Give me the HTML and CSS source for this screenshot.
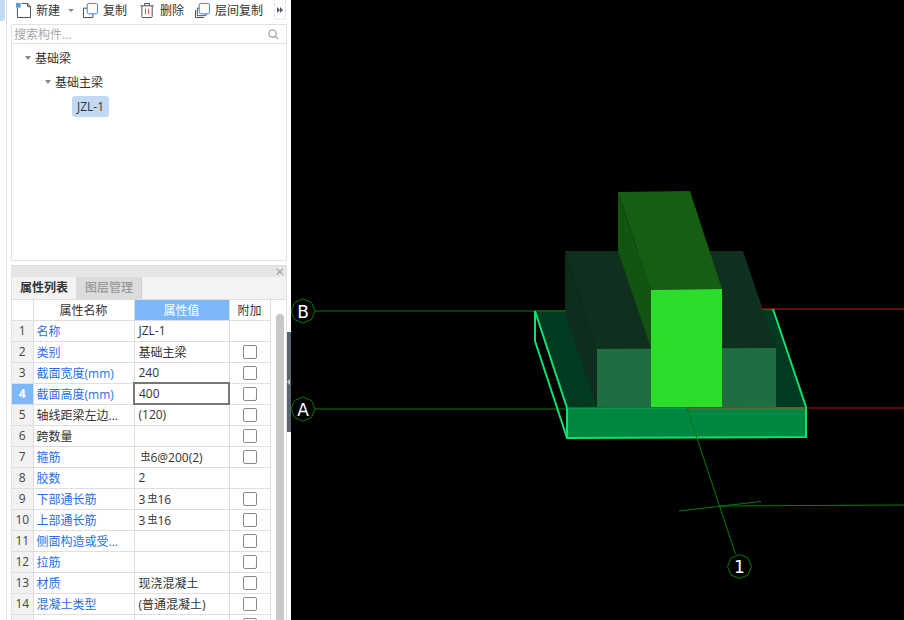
FILE: index.html
```html
<!DOCTYPE html>
<html lang="en">

<head>
  <meta charset="UTF-8" />
  <meta name="viewport" content="width=device-width, initial-scale=1" />
  <title>基础梁</title>
  <link rel="stylesheet" href="styles.css">
</head>

<body>
  <div class="app">
    <div class="side">
      <div class="rail">
        <div class="rail-tab"></div>
      </div>
      <div class="main">
        <!-- toolbar -->
        <div class="toolbar">
          <span class="tool tool-new">
            <svg class="icon" viewBox="0 0 16 16">
              <path class="ic-line" d="M1.5 5v10.5h14V4l-3-3.500H6" />
              <path class="ic-line" d="M12.500 .5v3.500h3" />
              <rect class="ic-dots" x="0" y="0" width="5" height="5" />
            </svg>
            新建
          </span>
          <span class="caret-small"></span>
          <span class="tool tool-copy">
            <svg class="icon" viewBox="0 0 16 16">
              <path class="ic-line" d="M4.500 5.500H.5v10h10v-4" />
              <rect class="ic-blue" x="4.500" y=".5" width="11" height="11" rx="1.500" />
            </svg>
            复制
          </span>
          <span class="tool tool-del">
            <svg class="icon" viewBox="0 0 16 16">
              <path class="ic-line" d="M.5 3h14M5 3V.5h5V3M2 3v11.500q0 1 1 1h9q1 0 1-1V3" />
              <path class="ic-red" d="M5.800 6v6M9.200 6v6" />
            </svg>
            删除
          </span>
          <span class="tool tool-layer">
            <svg class="icon" viewBox="0 0 16 16">
              <path class="ic-line" d="M4.500 5.500H2.500v8h9v-2M.5 7.500v8h9" />
              <rect class="ic-blue" x="4.500" y=".5" width="11" height="11" rx="1.500" />
            </svg>
            层间复制
          </span>
          <span class="more">
            <span class="more-arrow"></span><span class="more-arrow"></span>
          </span>
        </div>

        <!-- search -->
        <div class="search">
          <span>搜索构件...</span>
          <svg class="search-icon" viewBox="0 0 12 12">
            <circle cx="5" cy="5" r="4" />
            <path d="M8 8l3 3" />
          </svg>
        </div>

        <!-- tree -->
        <div class="tree">
          <div class="tree-row level-1"><span class="tree-caret"></span>基础梁</div>
          <div class="tree-row level-2"><span class="tree-caret"></span>基础主梁</div>
          <div class="tree-row level-3"><span class="tree-pill">JZL-1</span></div>
        </div>

        <!-- attributes -->
        <div class="panel">
          <div class="panel-head"><span class="panel-close">×</span></div>
          <div class="tabs">
            <div class="tab active">属性列表</div>
            <div class="tab">图层管理</div>
          </div>
          <div class="grid-wrap">
            <table class="grid">
              <colgroup>
                <col class="c-num">
                <col class="c-name">
                <col class="c-val">
                <col class="c-add">
              </colgroup>
              <tr class="head">
                <th></th>
                <th>属性名称</th>
                <th class="sel-head">属性值</th>
                <th>附加</th>
              </tr>
              <tr>
                <td class="num">1</td>
                <td class="name blue">名称</td>
                <td class="val">JZL-1</td>
                <td></td>
              </tr>
              <tr>
                <td class="num">2</td>
                <td class="name blue">类别</td>
                <td class="val">基础主梁</td>
                <td class="add"><span class="check"></span></td>
              </tr>
              <tr>
                <td class="num">3</td>
                <td class="name blue">截面宽度(mm)</td>
                <td class="val">240</td>
                <td class="add"><span class="check"></span></td>
              </tr>
              <tr>
                <td class="num cur">4</td>
                <td class="name blue">截面高度(mm)</td>
                <td class="val editing">400</td>
                <td class="add"><span class="check"></span></td>
              </tr>
              <tr>
                <td class="num">5</td>
                <td class="name">轴线距梁左边...</td>
                <td class="val">(120)</td>
                <td class="add"><span class="check"></span></td>
              </tr>
              <tr>
                <td class="num">6</td>
                <td class="name">跨数量</td>
                <td class="val"></td>
                <td class="add"><span class="check"></span></td>
              </tr>
              <tr>
                <td class="num">7</td>
                <td class="name blue">箍筋</td>
                <td class="val"><span class="rebar">虫</span>6@200(2)</td>
                <td class="add"><span class="check"></span></td>
              </tr>
              <tr>
                <td class="num">8</td>
                <td class="name blue">胶数</td>
                <td class="val">2</td>
                <td></td>
              </tr>
              <tr>
                <td class="num">9</td>
                <td class="name blue">下部通长筋</td>
                <td class="val">3<span class="rebar">虫</span>16</td>
                <td class="add"><span class="check"></span></td>
              </tr>
              <tr>
                <td class="num">10</td>
                <td class="name blue">上部通长筋</td>
                <td class="val">3<span class="rebar">虫</span>16</td>
                <td class="add"><span class="check"></span></td>
              </tr>
              <tr>
                <td class="num">11</td>
                <td class="name blue">侧面构造或受...</td>
                <td class="val"></td>
                <td class="add"><span class="check"></span></td>
              </tr>
              <tr>
                <td class="num">12</td>
                <td class="name blue">拉筋</td>
                <td class="val"></td>
                <td class="add"><span class="check"></span></td>
              </tr>
              <tr>
                <td class="num">13</td>
                <td class="name blue">材质</td>
                <td class="val">现浇混凝土</td>
                <td class="add"><span class="check"></span></td>
              </tr>
              <tr>
                <td class="num">14</td>
                <td class="name blue">混凝土类型</td>
                <td class="val">(普通混凝土)</td>
                <td class="add"><span class="check"></span></td>
              </tr>
              <tr>
                <td class="num"></td>
                <td class="name"></td>
                <td class="val"></td>
                <td class="add"><span class="check"></span></td>
              </tr>
            </table>
            <div class="scroll">
              <div class="thumb"></div>
            </div>
          </div>
        </div>
      </div>
    </div>

    <div class="splitter"><span class="splitter-arrow"></span></div>

    <!-- 3d view, coordinates are those of the whole window -->
    <div class="view">
      <svg class="scene" viewBox="291 0 613 620">
        <!-- axis lines -->
        <path class="axis" d="M315 311H565M315 409H687M687 408L735.500 554M679 511L761 501.500M719 506L904 505" />
        <path class="axis-red" d="M763 309H904M806 408H904" />

        <!-- slab -->
        <polygon class="slab-top" points="535,311 773,309 806,407 567,408" />
        <polygon class="slab-front" points="567,408 806,407 806,437 567,438" />
        <path class="axis" d="M535 311H565M743 309.500H773" />

        <!-- wide beam -->
        <polygon class="wide-top" points="565,251 743,251 776,348 597,349" />
        <polygon class="wide-side" points="565,251 597,349 597,407 565,312" />
        <polygon class="wide-front" points="597,349 776,348 776,407 597,407" />

        <!-- narrow beam -->
        <polygon class="beam-top" points="618,192 690,191 722,289 651,290" />
        <polygon class="beam-side" points="618,192 651,290 651,348 618,251" />
        <polygon class="beam-front" points="651,290 722,289 722,407 651,407" />

        <!-- slab wireframe -->
        <path class="wire" d="M535 341V311L567 408V438L806 437V407L773 309M535 341L567 438" />
        <path class="wire-mid" d="M567 408H687" />
        <path class="axis-red-over" d="M687 408H806" />
        <path class="axis" d="M687 408L697 438" />

        <!-- axis labels -->
        <g transform="translate(303 311)">
          <polygon class="bubble" points="0,-12 8.500,-8.500 12,0 8.500,8.500 0,12 -8.500,8.500 -12,0 -8.500,-8.500" />
          <text class="bubble-text" y="6.500">B</text>
        </g>
        <g transform="translate(303 409)">
          <polygon class="bubble" points="0,-12 8.500,-8.500 12,0 8.500,8.500 0,12 -8.500,8.500 -12,0 -8.500,-8.500" />
          <text class="bubble-text" y="6.500">A</text>
        </g>
        <g transform="translate(739.500 566.500)">
          <polygon class="bubble" points="0,-12 8.500,-8.500 12,0 8.500,8.500 0,12 -8.500,8.500 -12,0 -8.500,-8.500" />
          <text class="bubble-text" y="6.500">1</text>
        </g>
      </svg>
    </div>
  </div>
</body>

</html>
```

FILE: styles.css
```css
* {
  box-sizing: border-box;
}

html,
body {
  margin: 0;
  height: 100%;
  overflow: hidden;
}

body {
  font-family: 'Open Sans', 'Noto Sans CJK SC', sans-serif;
  font-size: 12px;
  color: #333;
  background: #000;
}

.app {
  display: flex;
  height: 620px;
  position: relative;
}

.side {
  width: 291px;
  flex: none;
  display: flex;
  background: #fff;
}

.rail {
  width: 7px;
  flex: none;
  border-right: 1px solid #e0e0e0;
}

.rail-tab {
  width: 5px;
  height: 21px;
  background: #c5dcf5;
  border-radius: 0 0 3px 0;
}

.main {
  width: 276px;
  margin-left: 4px;
  display: flex;
  flex-direction: column;
}

/* toolbar */
.toolbar {
  height: 25px;
  flex: none;
  display: flex;
  align-items: flex-start;
  border-bottom: 1px solid #e2e2e2;
  position: relative;
  margin-left: 1px;
}

.tool {
  display: flex;
  align-items: center;
  gap: 5px;
  height: 21px;
  line-height: 21px;
  white-space: nowrap;
}

.tool-new {
  margin-left: 4px;
}

.tool-copy {
  margin-left: 9px;
}

.tool-del {
  margin-left: 13px;
}

.tool-layer {
  margin-left: 11px;
}

.icon {
  width: 15px;
  height: 15px;
  flex: none;
  overflow: visible;
}

.ic-line {
  fill: none;
  stroke: #444;
  stroke-width: 1;
}

.ic-blue {
  fill: #fff;
  stroke: #2f7fd6;
  stroke-width: 1;
}

.ic-red {
  fill: none;
  stroke: #d83a3a;
  stroke-width: 1;
}

.ic-dots {
  fill: #5a9be0;
}

.caret-small {
  width: 0;
  height: 0;
  margin: 9px 0 0 8px;
  border-left: 3px solid transparent;
  border-right: 3px solid transparent;
  border-top: 3px solid #888;
}

.more {
  position: absolute;
  right: 1px;
  top: 0;
  width: 12px;
  height: 20px;
  border: 1px solid #e8e8e8;
  border-top: none;
  border-radius: 0 0 4px 4px;
  display: flex;
  align-items: center;
  justify-content: center;
}

.more-arrow {
  width: 0;
  height: 0;
  border-top: 3px solid transparent;
  border-bottom: 3px solid transparent;
  border-left: 3px solid #556;
}

/* search */
.search {
  height: 19px;
  flex: none;
  display: flex;
  align-items: center;
  justify-content: space-between;
  padding: 0 7px 0 2px;
  color: #a8a8a8;
  border-left: 1px solid #e2e2e2;
  border-right: 1px solid #e2e2e2;
  border-bottom: 1px solid #e2e2e2;
}

.search-icon {
  width: 11px;
  height: 11px;
  fill: none;
  stroke: #aaa;
  stroke-width: 1.500;
}

/* tree */
.tree {
  height: 217px;
  flex: none;
  padding-top: 2px;
  border-left: 1px solid #e2e2e2;
  border-right: 1px solid #e2e2e2;
  border-bottom: 1px solid #e2e2e2;
}

.tree-row {
  height: 24px;
  display: flex;
  align-items: center;
  color: #333;
}

.level-1 {
  padding-left: 13px;
}

.level-2 {
  padding-left: 33px;
}

.level-3 {
  padding-left: 60px;
}

.tree-caret {
  width: 0;
  height: 0;
  margin-right: 4px;
  border-left: 3.500px solid transparent;
  border-right: 3.500px solid transparent;
  border-top: 4px solid #888;
}

.tree-pill {
  height: 21px;
  width: 37px;
  line-height: 21px;
  text-align: center;
  background: #c2d9f3;
  border-radius: 3px;
}

/* attribute panel */
.panel {
  margin-top: 4px;
  flex: 1;
  min-height: 0;
  display: flex;
  flex-direction: column;
  border-left: 1px solid #e2e2e2;
  border-right: 1px solid #e2e2e2;
}

.panel-head {
  height: 12px;
  flex: none;
  background: #e6e6e6;
  position: relative;
  border-top: 1px solid #dcdcdc;
}

.panel-close {
  position: absolute;
  right: 2px;
  top: 0;
  font-size: 15px;
  line-height: 11px;
  color: #999;
}

.tabs {
  height: 23px;
  flex: none;
  display: flex;
  background: #f3f3f3;
  border-bottom: 1px solid #dedede;
}

.tab {
  width: 65px;
  text-align: center;
  line-height: 22px;
  color: #999;
  background: #dcdcdc;
  border-right: 1px solid #cfcfcf;
  font-weight: 500;
}

.tab.active {
  color: #333;
  background: #f3f3f3;
  border-right: 1px solid #dcdcdc;
  font-weight: 700;
}

.grid-wrap {
  flex: 1;
  min-height: 0;
  display: flex;
  background: #fff;
}

.grid {
  table-layout: fixed;
  border-collapse: collapse;
  width: 258px;
  flex: none;
  align-self: flex-start;
}

.c-num {
  width: 21px;
}

.c-name {
  width: 101px;
}

.c-val {
  width: 95px;
}

.c-add {
  width: 41px;
}

.grid th,
.grid td {
  height: 21px;
  padding: 0;
  border: 1px solid #dedede;
  border-left: none;
  border-top: none;
  white-space: nowrap;
  overflow: hidden;
}

.grid th {
  height: 20px;
  font-weight: 400;
  text-align: center;
  color: #333;
}

.grid .sel-head {
  background: #7cb8f7;
  color: #fff;
}

.grid .num {
  background: #f2f2f2;
  text-align: center;
  color: #444;
}

.grid .cur {
  background: #7cb8f7;
  color: #fff;
  font-weight: 700;
}

.grid .name {
  padding-left: 3px;
}

.blue {
  color: #2a6fe8;
}

.grid .val {
  padding-left: 4px;
  color: #333;
}

.grid .editing {
  border: 2px solid #777;
}

.add {
  text-align: center;
}

.check {
  display: block;
  width: 14px;
  height: 14px;
  margin: 0 auto;
  border: 1px solid #888;
  border-radius: 2px;
  background: #fff;
}

.rebar {
  font-size: 10px;
  vertical-align: 2px;
  margin-left: 2px;
}

.scroll {
  flex: 1;
  padding: 14px 3px 0 5px;
}

.thumb {
  height: 306px;
  width: 8px;
  background: #c8c8c8;
  border-radius: 4px 4px 0 0;
}

/* splitter over the edge of the view */
.splitter {
  position: absolute;
  left: 287px;
  top: 332px;
  width: 4px;
  height: 100px;
  background: #5a6570;
}

.splitter-arrow {
  position: absolute;
  left: 0;
  top: 47px;
  border-top: 3px solid transparent;
  border-bottom: 3px solid transparent;
  border-right: 3px solid #c8ccd0;
}

/* 3d view */
.view {
  flex: 1;
  background: #000;
}

.scene {
  display: block;
  width: 613px;
  height: 620px;
}

.axis {
  fill: none;
  stroke: #0a7a0a;
  stroke-width: 1;
}

.axis-red {
  fill: none;
  stroke: #c81414;
  stroke-width: 1;
}

.axis-red-over {
  fill: none;
  stroke: #b04a20;
  stroke-width: 1;
}

.slab-top {
  fill: #003a20;
}

.slab-front {
  fill: #008842;
}

.wide-top {
  fill: #10301f;
}

.wide-side {
  fill: #0f2d1c;
}

.wide-front {
  fill: #1f6e42;
}

.beam-top {
  fill: #155e12;
}

.beam-side {
  fill: #125510;
}

.beam-front {
  fill: #2ddd2b;
}

.wire {
  fill: none;
  stroke: #10e070;
  stroke-width: 2;
}

.wire-mid {
  fill: none;
  stroke: #10a858;
  stroke-width: 1;
}

.bubble {
  fill: #000;
  stroke: #0a7a0a;
  stroke-width: 1;
}

.bubble-text {
  fill: #fff;
  font-family: 'DejaVu Sans', sans-serif;
  font-size: 17px;
  text-anchor: middle;
}
```
